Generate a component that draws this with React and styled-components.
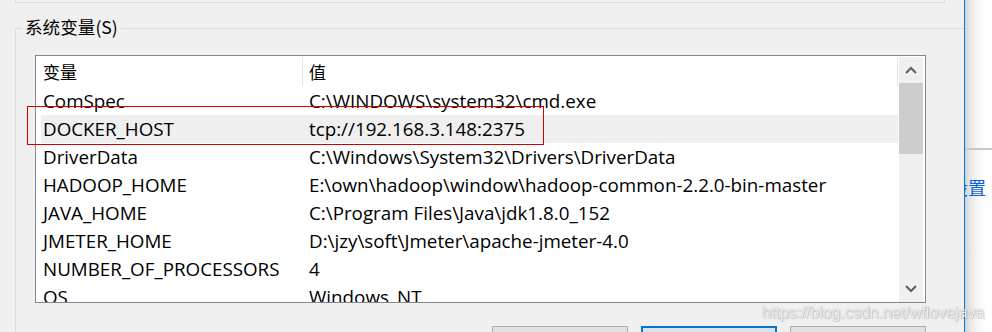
import React from "react";
import styled, { createGlobalStyle } from "styled-components";

const Global = createGlobalStyle`
  html, body { margin: 0; padding: 0; background: #f0f0f0; overflow: hidden; }
  #root { width: 992px; height: 332px; }
`;

const Screen = styled.div`
  position: relative;
  width: 992px;
  height: 332px;
  display: flex;
  overflow: hidden;
  background: #f0f0f0;
`;

const Dialog = styled.div`
  position: relative;
  width: 964px;
  height: 332px;
  flex: none;
  background: #f0f0f0;
  border-right: 1px solid #0078d7;
  display: flex;
  flex-direction: column;
  overflow: hidden;
`;

const PrevGroupEnd = styled.div`
  margin-left: 15px;
  width: 928px;
  height: 2px;
  border: 1px solid #dcdcdc;
  border-top: none;
  flex: none;
`;

const GroupBox = styled.div`
  position: relative;
  margin: 25px 0 0 15px;
  width: 928px;
  border: 1px solid #dcdcdc;
  border-bottom: none;
  padding: 26px 18px 0 19px;
  box-sizing: content-box;
  flex: 1;
  display: flex;
  flex-direction: column;
`;

const GroupTitle = styled.div`
  position: absolute;
  left: 6px;
  top: -13px;
  padding: 0 3px;
  background: #f0f0f0;
  font-family: "Noto Sans CJK SC", sans-serif;
  font-size: 17.6px;
  line-height: 22px;
  color: #000;
`;

const ListView = styled.div`
  width: 889px;
  height: 246px;
  border: 1px solid #828790;
  background: #fff;
  display: flex;
  flex: none;
`;

const ListContent = styled.div`
  flex: 1;
  display: flex;
  flex-direction: column;
  overflow: hidden;
`;

const Header = styled.div`
  height: 31px;
  display: flex;
  flex: none;
`;

const HeaderCell = styled.div`
  box-sizing: border-box;
  width: ${(p) => p.$w}px;
  padding-left: ${(p) => p.$pad}px;
  margin: 1px 0 1px 0;
  border-right: 1px solid ${(p) => (p.$sep ? "#e5e5e5" : "transparent")};
  display: flex;
  align-items: center;
  font-family: "Noto Sans CJK SC", sans-serif;
  font-size: 17px;
  color: #000;
`;

const Row = styled.div`
  box-sizing: border-box;
  height: 28px;
  padding-bottom: 1px;
  margin-left: 5px;
  width: 857px;
  flex: none;
  display: flex;
  align-items: center;
  background: ${(p) => (p.$selected ? "#efefef" : "transparent")};
  font-family: "Open Sans", "Noto Sans", sans-serif;
  font-size: 18.8px;
  line-height: 24px;
  color: #000;
  white-space: nowrap;
`;

const NameCell = styled.div`
  box-sizing: border-box;
  width: 262px;
  padding-left: 2px;
  flex: none;
`;

const ValueCell = styled.div`
  padding-left: 6px;
  flex: 1;
`;

const ScrollBar = styled.div`
  width: 24px;
  margin: 1px 2px 0 0;
  background: #f0f0f0;
  display: flex;
  flex-direction: column;
  flex: none;
`;

const ScrollButton = styled.div`
  height: 26px;
  flex: none;
  display: flex;
  align-items: center;
  justify-content: center;
`;

const Thumb = styled.div`
  height: 71px;
  background: #cdcdcd;
  flex: none;
`;

const Track = styled.div`
  flex: 1;
`;

const ButtonRow = styled.div`
  margin-top: 23px;
  width: 891px;
  display: flex;
  justify-content: flex-end;
  gap: 13px;
`;

const Button = styled.div`
  box-sizing: border-box;
  width: 136px;
  height: 30px;
  background: #e1e1e1;
  border: ${(p) => (p.$focused ? "2px solid #0078d7" : "1px solid #adadad")};
`;

const Annotation = styled.div`
  position: absolute;
  left: 27px;
  top: 106px;
  width: 515px;
  height: 37px;
  border: 1px solid #d40000;
  pointer-events: none;
`;

const BackWindow = styled.div`
  flex: 1;
  height: 332px;
  overflow: hidden;
  display: flex;
  flex-direction: column;
  background: linear-gradient(to right, #d2d2d2 0px, #e6e6e6 5px, #f7f7f7 13px, #ffffff 22px);
`;

const BackDivider = styled.div`
  margin-top: 148px;
  height: 2px;
  background: #c8c8c8;
  flex: none;
`;

const BackLink = styled.div`
  margin: 26px 0 0 -15px;
  font-family: "Noto Sans CJK SC", sans-serif;
  font-size: 18px;
  line-height: 22px;
  color: #0a64d2;
  white-space: nowrap;
`;

const Watermark = styled.div`
  position: absolute;
  left: 762px;
  top: 303px;
  font-family: "Liberation Sans", Arial, sans-serif;
  font-size: 16px;
  line-height: 20px;
  color: rgba(255, 255, 255, 0.85);
  text-shadow: 0 0 1px rgba(0, 0, 0, 0.35), 1px 1px 1px rgba(0, 0, 0, 0.15);
  white-space: nowrap;
  pointer-events: none;
`;

const Chevron = ({ up }) => (
  <svg width="12" height="8" viewBox="0 0 12 8">
    <path
      d={up ? "M1 7 L6 2 L11 7" : "M1 1 L6 6 L11 1"}
      fill="none"
      stroke="#606060"
      strokeWidth="2"
    />
  </svg>
);

const rows = [
  ["ComSpec", "C:\\WINDOWS\\system32\\cmd.exe"],
  ["DOCKER_HOST", "tcp://192.168.3.148:2375", true],
  ["DriverData", "C:\\Windows\\System32\\Drivers\\DriverData"],
  ["HADOOP_HOME", "E:\\own\\hadoop\\window\\hadoop-common-2.2.0-bin-master"],
  ["JAVA_HOME", "C:\\Program Files\\Java\\jdk1.8.0_152"],
  ["JMETER_HOME", "D:\\jzy\\soft\\Jmeter\\apache-jmeter-4.0"],
  ["NUMBER_OF_PROCESSORS", "4"],
  ["OS", "Windows_NT"],
];

export default function App() {
  return (
    <>
      <Global />
      <Screen>
        <Dialog>
          <PrevGroupEnd />
          <GroupBox>
            <GroupTitle>系统变量(S)</GroupTitle>
            <ListView>
              <ListContent>
                <Header>
                  <HeaderCell $w={267} $pad={7} $sep>变量</HeaderCell>
                  <HeaderCell $w={595} $pad={6} $sep>值</HeaderCell>
                </Header>
                {rows.map(([name, value, sel]) => (
                  <Row key={name} $selected={sel}>
                    <NameCell>{name}</NameCell>
                    <ValueCell>{value}</ValueCell>
                  </Row>
                ))}
              </ListContent>
              <ScrollBar>
                <ScrollButton>
                  <Chevron up />
                </ScrollButton>
                <Thumb />
                <Track />
                <ScrollButton>
                  <Chevron />
                </ScrollButton>
              </ScrollBar>
            </ListView>
            <ButtonRow>
              <Button />
              <Button $focused />
              <Button />
            </ButtonRow>
          </GroupBox>
          <Annotation />
        </Dialog>
        <BackWindow>
          <BackDivider />
          <BackLink>设置</BackLink>
        </BackWindow>
        <Watermark>https://blog.csdn.net/wflovejava</Watermark>
      </Screen>
    </>
  );
}
